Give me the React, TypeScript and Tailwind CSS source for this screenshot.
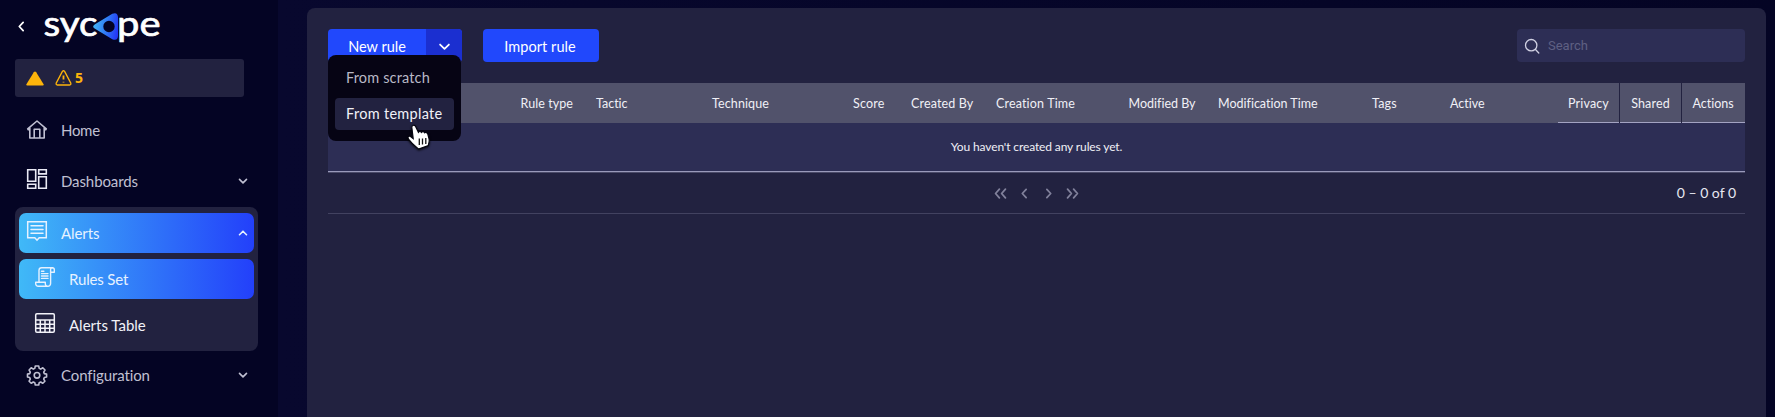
import type { ReactNode } from 'react';

const stroke = { fill: 'none', stroke: 'currentColor', strokeLinecap: 'round', strokeLinejoin: 'round' } as const;

function Icon({ children, className = '', width = 1.5 }: { children: ReactNode; className?: string; width?: number }) {
  return (
    <svg viewBox="0 0 20 20" className={`size-5 shrink-0 overflow-visible ${className}`} {...stroke} strokeWidth={width}>
      {children}
    </svg>
  );
}

const HomeIcon = () => (
  <Icon width={1.6}>
    <path d="M.7 8.8 10 1l9.3 7.8M2.8 7.8V18h14.4V7.8M7.2 18V9.2h5.6V18M1 9.6h1.6M17.4 9.6H19" />
  </Icon>
);

const DashboardIcon = () => (
  <Icon className="-translate-y-0.5 text-[#e9e9f4]" width={1.6}>
    <path strokeLinejoin="miter" d="M.7.7h8v11.6h-8zM11.7.7h7.6v4.2h-7.6zM.7 15.2h8v4.1h-8zM11.7 7.8h7.6v11.5h-7.6z" />
  </Icon>
);

const AlertIcon = () => (
  <Icon className="-translate-y-0.5" width={1.5}>
    <path strokeLinejoin="miter" d="M.7.7h18.6v16.1h-7.1L10 19.2l-2.2-2.4H.7zM4 4.8h12M4 8.5h12M4 12.2h12" />
  </Icon>
);

const RulesIcon = () => (
  <Icon className="-translate-y-0.5" width={1.4}>
    <path d="M4 15.3V3.2A2.6 2.6 0 0 1 6.600.7H17.300a2 2 0 0 1 2 2v2.600h-3.600M15.600 5.300V2.700a1.800 1.800 0 0 1 1.800-2M15.600 5.300v11.300a2.700 2.700 0 0 1-2.700 2.700H3.200A2.500 2.500 0 0 1 .7 16.800v-1.500h9.600v1.400a2.600 2.600 0 0 0 2.600 2.600M6.500 4.200h2.400M6.500 6.600H13M6.500 9H13M6.500 11.400H13" />
  </Icon>
);

const TableIcon = () => (
  <Icon className="-translate-y-0.5" width={1.5}>
    <rect x=".7" y=".7" width="18.6" height="18.6" rx="1.2" />
    <path d="M.7 7h18.600M.7 11.200h18.600M.7 15.300h18.600M5.300 7v12.300M10 7v12.300M14.700 7v12.300" />
  </Icon>
);

const GearIcon = () => (
  <Icon width={1.6}>
    <path d="M8.300 1h3.400l.5 2.400 1.500.7 2.100-1.300 2.200 2.200-1.300 2.100.6 1.500 2.300.5v2.800l-2.300.7-.6 1.500 1.200 2.100-2.100 2.100-2.100-1.300-1.500.7-.5 2.300H8.300l-.5-2.300-1.500-.7-2.100 1.300-2.100-2.100 1.200-2.100-.6-1.500L.5 11.900V9.100l2.200-.5.6-1.500L2.100 5l2.100-2.200 2.100 1.300 1.500-.7z" />
    <circle cx="10" cy="10.300" r="2.800" />
  </Icon>
);

function Chevron({ d, className }: { d: string; className: string }) {
  return (
    <svg viewBox="0 0 10 10" className={`shrink-0 overflow-visible ${className}`} {...stroke} strokeWidth={1.6}>
      <path d={d} />
    </svg>
  );
}

const DOWN = 'M1.500 3.400 5 6.900l3.500-3.500';
const UP = 'M1.500 6.700 5 3.200l3.500 3.500';
const LEFT = 'M6.500 1.300 3 5l3.500 3.700';
const RIGHT = 'M3.500 1.300 7 5 3.500 8.700';

function Logo() {
  return (
    <svg viewBox="0 0 118 34" className="h-[34px] w-[118px] overflow-visible" role="img">
      <defs>
        <linearGradient id="mark" x1="0" x2="1" y1="0.4" y2="0.6">
          <stop offset="0" stopColor="#45b8f5" />
          <stop offset="0.55" stopColor="#2f78f5" />
          <stop offset="1" stopColor="#2337f5" />
        </linearGradient>
      </defs>
      <g fill="#fff" stroke="#fff" strokeWidth="0.7" fontFamily="Lato, sans-serif" fontSize="35">
        <text x="-0.500" y="26.500" textLength="54" lengthAdjust="spacingAndGlyphs">syc</text>
        <text x="73" y="26.500" textLength="43.500" lengthAdjust="spacingAndGlyphs">pe</text>
      </g>
      <path
        fill="url(#mark)"
        fillRule="evenodd"
        d="M51 15.200 68.300 4.800Q73.500 2.600 74 8v19q-.5 5.400-5.700 3.200L51 19.800q-3.700-2.300 0-4.600ZM70.700 17.500a5.700 5.700 0 1 0-11.400 0 5.700 5.700 0 0 0 11.400 0Z"
      />
    </svg>
  );
}

function NavItem({ icon, label, chevron, className = '' }: { icon: ReactNode; label: string; chevron?: string; className?: string }) {
  return (
    <div className={`flex items-center ${className}`}>
      {icon}
      <span className="ml-3.5 flex-1">{label}</span>
      {chevron && <Chevron d={chevron} className="mr-1.5 size-2.5" />}
    </div>
  );
}

const columns = [
  { label: 'Rule type', className: 'w-[75.500px] tracking-[0.08px]' },
  { label: 'Tactic', className: 'w-[116px]' },
  { label: 'Technique', className: 'w-[141px] tracking-[0.12px]' },
  { label: 'Score', className: 'w-[58px] tracking-[0.18px]' },
  { label: 'Created By', className: 'w-[85px] tracking-[0.15px]' },
  { label: 'Creation Time', className: 'w-[132.500px] tracking-[0.16px]' },
  { label: 'Modified By', className: 'w-[89.500px]' },
  { label: 'Modification Time', className: 'w-[154px]' },
  { label: 'Tags', className: 'w-[78px] tracking-[0.2px]' },
  { label: 'Active', className: 'w-[108px]' },
];

function HandCursor() {
  return (
    <svg viewBox="0 0 26 28" className="absolute top-[68px] left-[78px] h-7 w-[26px] overflow-visible drop-shadow-[0px_1px_1px_rgba(0,0,0,0.8)]">
      <path
        d="M6.800 2.600c1.100-.7 2.300-.2 2.800.9l2.800 5.800c.8-1.200 2.400-1 3 .1.900-1.100 2.600-.9 3.200.4 1.400-.8 2.800-.1 3.200 1.300l1.300 5.100c.6 2.600-.6 3.900-.8 6.400l-9.700 3.400c-2.700-2.400-6.400-5-9.900-9.700-1.500-2-.3-3.700 1.300-3 1.100.5 2.100 1.400 3.200 2.300L5.900 5.100c-.4-1-.1-1.900.9-2.500Z"
        fill="#fff"
        stroke="#050510"
        strokeWidth="1.200"
      />
      <path d="M13.300 15.500v6.400M16.500 15.500v6M19.800 15v6" stroke="#111" strokeWidth="1.300" />
    </svg>
  );
}

export default function App() {
  return (
    <div className="flex h-[417px] w-[1775px] overflow-hidden bg-[#040424] font-[Lato,sans-serif] text-[15px] leading-5 text-[#c0c0d2] [font-variant-ligatures:none]">
      <aside className="w-[278px] shrink-0 pl-[15px]">
        <div className="flex h-[59px] items-start pt-[9px]">
          <Chevron d={LEFT} className="mt-[12px] mr-[17px] ml-px size-[11px] text-white" />
          <Logo />
        </div>
        <div className="mb-[9px] flex h-[38px] w-[229px] items-center rounded-[3px] bg-[#222240] pl-[11px] text-[#fdb40b]">
          <svg viewBox="0 0 18 15" className="h-[15px] w-[18px] fill-current"><path d="M9 .5q.7 0 1.200.8l7.400 12q.5 1.200-.8 1.200H1.200q-1.300 0-.8-1.200l7.400-12Q8.300.5 9 .5Z" /></svg>
          <svg viewBox="0 0 17 16" className="ml-[11px] h-4 w-[17px] overflow-visible" {...stroke} strokeWidth="1.300">
            <path d="M7.400 1.400q1.100-1.300 2.200 0l6.200 11.700q.5 1.700-1.200 1.900H2.400Q.7 14.800 1.200 13.100z" />
            <path d="M8.500 5.500v4M8.500 11.700v.8" strokeWidth="1.800" strokeLinecap="butt" />
          </svg>
          <span className="ml-[3px] font-['Open_Sans'] text-[14px] font-bold">5</span>
        </div>
        <nav>
          <NavItem icon={<HomeIcon />} label="Home" className="-mt-px mb-px h-[50px] w-[239px] pl-3 tracking-[-0.3px]" />
          <NavItem icon={<DashboardIcon />} label="Dashboards" chevron={DOWN} className="h-[50px] w-[239px] pl-3 tracking-[-0.1px]" />
          <div className="mt-px flex h-36 w-[243px] flex-col gap-1.5 rounded-lg bg-[#222240] px-1 py-1.5 text-[#e6f2ff]">
            <NavItem icon={<AlertIcon />} label="Alerts" chevron={UP} className="h-10 rounded-[7px] bg-linear-to-r/srgb from-[#40b9f7] to-[#2340fa] pl-2 tracking-[-0.1px]" />
            <NavItem icon={<RulesIcon />} label="Rules Set" className="h-10 rounded-[7px] bg-linear-to-r/srgb from-[#40b9f7] to-[#2340fa] pl-4 tracking-[-0.15px]" />
            <NavItem icon={<TableIcon />} label="Alerts Table" className="h-10 pl-4 text-[#f2f2f8]" />
          </div>
          <NavItem icon={<GearIcon />} label="Configuration" chevron={DOWN} className="h-12 w-[239px] pl-3 tracking-[-0.1px]" />
        </nav>
      </aside>

      <div className="flex flex-1 bg-linear-to-r from-[#08082e] from-0% to-[#040424] to-100% pt-2 pr-[9px] pl-[29px]">
        <main className="flex-1 rounded-t-lg bg-[#222240] px-[21px] pt-[21px]">
          <div className="flex h-[54px] items-start">
            <div className="relative flex h-[33px] w-[134px] rounded bg-[#2148fc] text-[14.500px] text-white">
              <button className="w-[98px] rounded-l pt-0.5">New rule</button>
              <button className="flex flex-1 items-center justify-center rounded-r bg-[#1b2fd0]">
                <Chevron d="M1 3.200 5 7.100l4-3.900" className="mt-0.5 size-[11px]" />
              </button>
              <div className="absolute top-[26px] left-0 flex h-[86px] w-[133px] flex-col gap-1 rounded-lg bg-[#060414] px-[7px] py-[7px] text-[#b9b9c6]">
                <div className="flex h-8 items-center pl-[11px] tracking-[0.15px]">From scratch</div>
                <div className="flex h-8 items-center rounded bg-[#222240] pl-[11px] tracking-[0.3px] text-[#f1f1f8]">From template</div>
                <HandCursor />
              </div>
            </div>
            <button className="ml-[21px] h-[33px] w-[116px] rounded bg-[#2148fc] pr-0.5 pt-[3px] text-[14.500px] tracking-[0.05px] text-white">Import rule</button>
            <div className="ml-auto flex h-[33px] w-[228px] items-center rounded bg-[#2d2e55] pl-2">
              <svg viewBox="0 0 14 14" className="size-3.5 overflow-visible text-[#d0d0e2]" {...stroke} strokeWidth="1.300">
                <circle cx="6.200" cy="6.200" r="5.700" />
                <path d="m10.500 10.500 3.300 3.500" />
              </svg>
              <span className="ml-[9px] font-[Roboto] text-[13px] text-[#5f6083]">Search</span>
            </div>
          </div>

          <div className="flex h-10 bg-[#51526b] pl-[192.500px] text-[12.500px] text-[#f0f0f6]">
            {columns.map((c) => (
              <div key={c.label} className={`flex shrink-0 items-center whitespace-nowrap pt-px ${c.className}`}>{c.label}</div>
            ))}
            <div className="flex flex-1 gap-px bg-[#222240]">
              <div className="flex w-[61px] items-center justify-center border-b border-[#a3a3c2] bg-[#51526b] pt-0.5 tracking-[0.15px]">Privacy</div>
              <div className="flex w-[61px] items-center justify-center border-b border-[#a3a3c2] bg-[#51526b] pt-0.5 tracking-[0.15px]">Shared</div>
              <div className="flex flex-1 items-center justify-center border-b border-[#a3a3c2] bg-[#51526b] pt-0.5 pr-px">Actions</div>
            </div>
          </div>
          <div className="flex h-[50px] items-center justify-center border-b border-[#4b4b69] bg-[#2d2e55] pb-0.5 text-[12px] tracking-[-0.12px] text-[#f0f0f6] shadow-[inset_0_-1px_0_#9a9abb]">
            You haven't created any rules yet.
          </div>
          <div className="flex h-[41px] items-center border-b border-[#424260]">
            <div className="ml-[667px] flex items-center text-[#81819b]">
              <Chevron d="M4 1 .5 5 4 9M9.500 1 6 5l3.500 4" className="size-[11px]" />
              <Chevron d={LEFT} className="ml-[13px] size-[11px]" />
              <Chevron d={RIGHT} className="ml-[13px] size-[11px]" />
              <Chevron d="M.5 1 4 5 .5 9M6 1l3.500 4L6 9" className="ml-[13px] size-[11px]" />
            </div>
            <span className="mr-[9px] ml-auto text-[14px] text-[#e8e8f2]">0 – 0 of 0</span>
          </div>
        </main>
      </div>
    </div>
  );
}
